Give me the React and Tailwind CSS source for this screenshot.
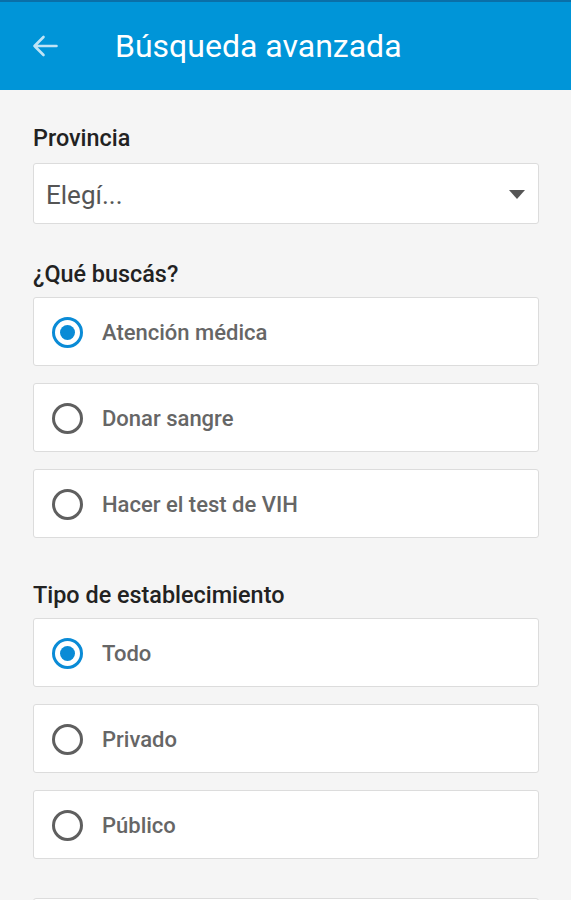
import React, { useState } from 'react';

// ── Radio option card ────────────────────────────────────────────────────────
const Option = ({ label, checked, onSelect }) => (
  <button
    type="button"
    onClick={onSelect}
    className="flex h-[69px] w-full items-center rounded-[3px] border border-[#dcdcdc] bg-white pl-[18px] pt-[2px] text-left"
  >
    <span className="flex h-[31px] w-[31px] items-center justify-center rounded-full border-[3px] border-solid"
      style={{ borderColor: checked ? '#0a8bd6' : '#5f5f5f' }}
    >
      {checked && <span className="h-[15px] w-[15px] rounded-full bg-[#0a8bd6]" />}
    </span>
    <span className="ml-[19px] text-[22px] font-medium leading-[26px] text-[#666666]">{label}</span>
  </button>
);

const OptionGroup = ({ title, options, value, setValue }) => (
  <div>
    <h2 className="pt-[1px] text-[23.4px] font-medium leading-[23px] text-[#222222]">{title}</h2>
    <div className="mt-[11px] flex flex-col gap-[17px]">
      {options.map(o => (
        <Option key={o} label={o} checked={value === o} onSelect={() => setValue(o)} />
      ))}
    </div>
  </div>
);

const App = () => {
  const [servicio, setServicio] = useState('Atención médica');
  const [tipo, setTipo]         = useState('Todo');

  return (
    <div className="flex h-[900px] w-full flex-col overflow-hidden bg-[#f5f5f5] font-['Roboto',sans-serif]">
      {/* ── Toolbar ── */}
      <header className="flex h-[90px] shrink-0 items-center border-t-2 border-[#0a6fa8] bg-[#0095d8] pl-[32px]">
        <svg width="26" height="22" viewBox="0 0 26 22" fill="none" stroke="#bfe4f6" strokeWidth="2.6" strokeLinecap="round" strokeLinejoin="round">
          <path d="M24.5 11H2.5M11.5 2L2.5 11L11.5 20" />
        </svg>
        <h1 className="ml-[57px] text-[32px] font-normal text-white">Búsqueda avanzada</h1>
      </header>

      {/* ── Form ── */}
      <main className="flex flex-col pl-[33px] pr-[32px] pt-[36px]">
        <h2 className="pt-[1px] text-[23.4px] font-medium leading-[23px] text-[#222222]">Provincia</h2>
        <div className="mt-[13px] flex h-[61px] items-center justify-between rounded-[3px] border border-[#dcdcdc] bg-white pl-[12px] pr-[13px] pt-[2px]">
          <span className="text-[26px] leading-[30px] text-[#555555]">Elegí...</span>
          <svg width="16" height="9" viewBox="0 0 16 9"><path d="M0 0H16L8 9Z" fill="#555555" /></svg>
        </div>

        <div className="mt-[38px]">
          <OptionGroup
            title="¿Qué buscás?"
            options={['Atención médica', 'Donar sangre', 'Hacer el test de VIH']}
            value={servicio}
            setValue={setServicio}
          />
        </div>

        <div className="mt-[45px]">
          <OptionGroup
            title="Tipo de establecimiento"
            options={['Todo', 'Privado', 'Público']}
            value={tipo}
            setValue={setTipo}
          />
        </div>

        <div className="mt-[39px] h-[60px] rounded-[3px] border border-[#dcdcdc] bg-white" />
      </main>
    </div>
  );
};

export default App;
